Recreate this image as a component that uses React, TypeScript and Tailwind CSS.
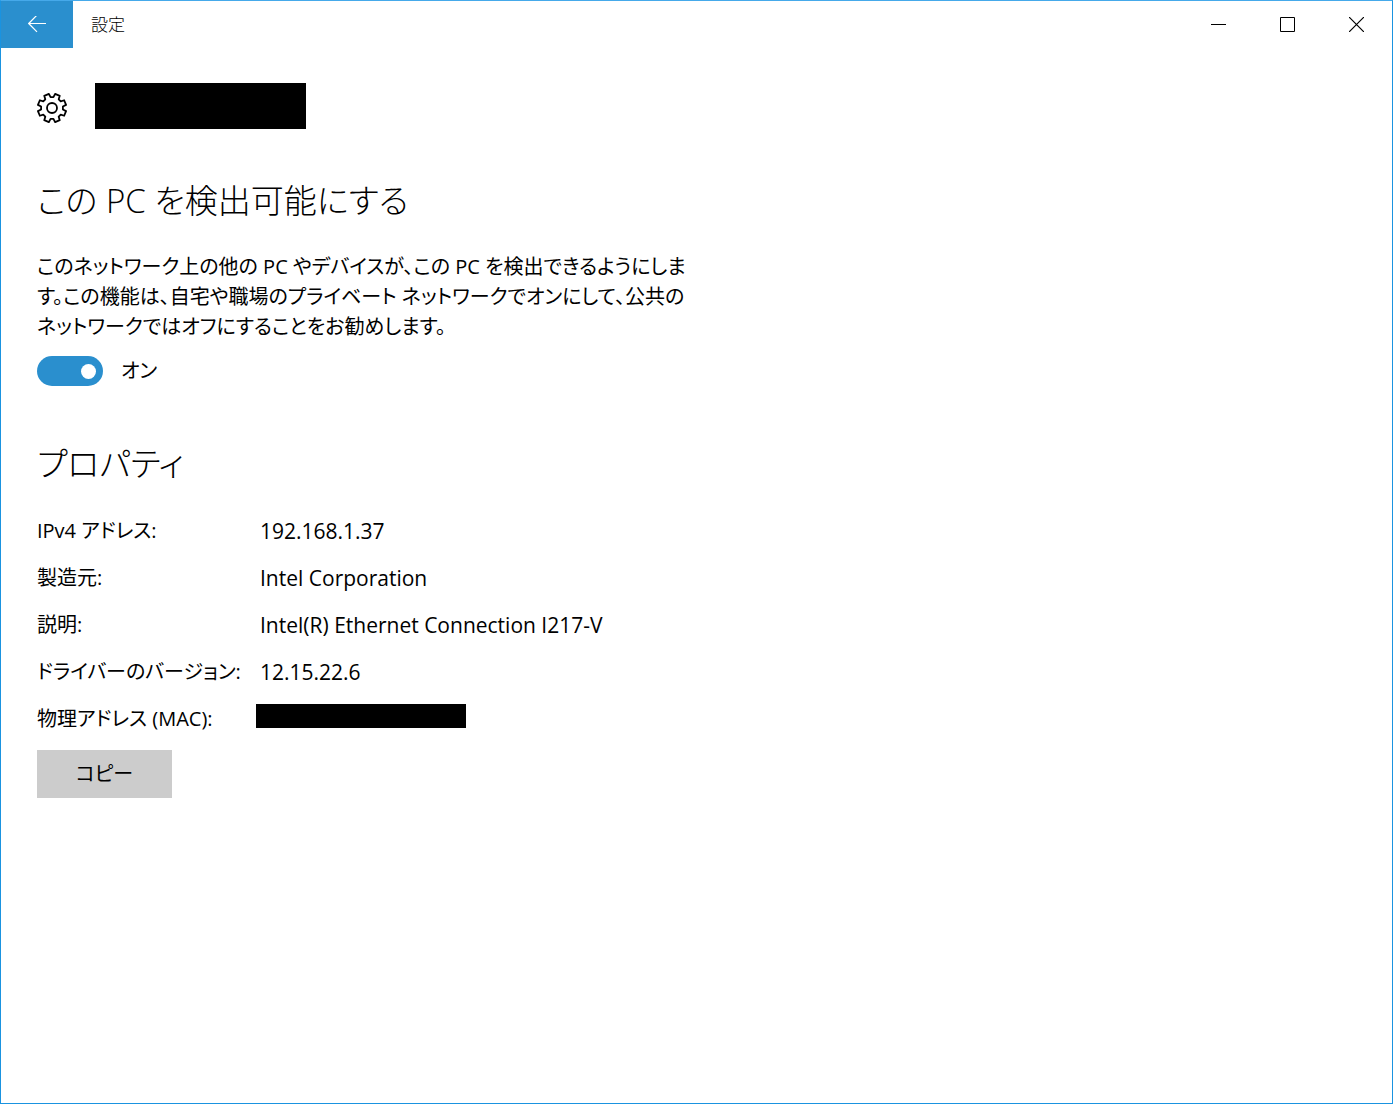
import React, { useState } from 'react';

interface Property {
  label: string;
  value: string;
}

const properties: Property[] = [
  { label: 'IPv4 アドレス:', value: '192.168.1.37' },
  { label: '製造元:', value: 'Intel Corporation' },
  { label: '説明:', value: 'Intel(R) Ethernet Connection I217-V' },
  { label: 'ドライバーのバージョン:', value: '12.15.22.6' },
  { label: '物理アドレス (MAC):', value: '' },
];

// Gear outline with eight teeth, centred on 0,0
const gearPath = (() => {
  const points: string[] = [];
  for (let i = 0; i < 8; i++) {
    const mid = i * 45 + 22.5;
    [[-15, 11], [-10, 14.4], [10, 14.4], [15, 11]].forEach(([offset, r]) => {
      const a = ((mid + offset - 90) * Math.PI) / 180;
      points.push(`${(r * Math.cos(a)).toFixed(2)} ${(r * Math.sin(a)).toFixed(2)}`);
    });
  }
  return `M${points.join('L')}Z`;
})();

const GearIcon: React.FC = () => (
  <svg className="h-[30px] w-[30px]" viewBox="-15 -15 30 30" fill="none" stroke="currentColor" strokeWidth={1.8} strokeLinejoin="round" aria-hidden="true">
    <path d={gearPath} />
    <circle r={5} />
  </svg>
);

const TitleBar: React.FC = () => (
  <header className="flex items-start justify-between">
    <div className="flex items-center">
      <button className="flex h-[47px] w-[72px] items-center justify-center bg-[#2a8fce] text-white" aria-label="戻る">
        <svg width="18" height="18" viewBox="0 0 18 18" fill="none" stroke="currentColor" strokeWidth={1.2}>
          <path d="M18 7.5H.8M9-.9L.7 7.5 9 15.9" />
        </svg>
      </button>
      <span className="ml-[18px] text-[17px] leading-6 font-light">設定</span>
    </div>
    <div className="flex pr-px">
      <button className="flex h-[47px] w-[69px] items-center justify-center" aria-label="最小化">
        <svg width="15" height="15" viewBox="0 0 15 15" stroke="currentColor">
          <path d="M0 7.5h15" />
        </svg>
      </button>
      <button className="flex h-[47px] w-[69px] items-center justify-center" aria-label="最大化">
        <svg width="15" height="15" viewBox="0 0 15 15" fill="none" stroke="currentColor">
          <path d="M.5.5h14v14H.5z" />
        </svg>
      </button>
      <button className="flex h-[47px] w-[69px] items-center justify-center" aria-label="閉じる">
        <svg width="15" height="15" viewBox="0 0 15 15" stroke="currentColor" strokeWidth={1.2}>
          <path d="M0 0l15 15M15 0L0 15" />
        </svg>
      </button>
    </div>
  </header>
);

interface ToggleProps {
  checked: boolean;
  onChange: (checked: boolean) => void;
}

const Toggle: React.FC<ToggleProps> = ({ checked, onChange }) => (
  <label className="mt-3.5 flex items-center gap-[18px] text-[20px] leading-[30px]">
    <input
      type="checkbox"
      role="switch"
      checked={checked}
      onChange={(e) => onChange(e.target.checked)}
      className="flex h-[30px] w-[66px] appearance-none items-center rounded-full bg-gray-400 px-[7px] before:h-[15px] before:w-[15px] before:rounded-full before:bg-white checked:justify-end checked:bg-[#2a8fce]"
    />
    <span>{checked ? 'オン' : 'オフ'}</span>
  </label>
);

export default function App() {
  const [discoverable, setDiscoverable] = useState(true);

  return (
    <div
      lang="ja"
      className="min-h-screen border border-[#1a93e0] border-t-[#45a9ea] bg-white font-['Open_Sans','Noto_Sans_CJK_JP',sans-serif] text-black [font-feature-settings:'palt']"
    >
      <TitleBar />
      <main className="px-9 pt-[35px]">
        <div className="flex items-end">
          <div className="pb-1.5">
            <GearIcon />
          </div>
          <h1 className="ml-7 h-[46px] w-[211px] bg-black" />
        </div>

        <section className="mt-12">
          <h2 className="text-[33px] leading-[48px] font-light">この PC を検出可能にする</h2>
          <p className="mt-[27px] text-[20px] leading-[30px]">
            このネットワーク上の他の PC やデバイスが、この PC を検出できるようにしま
            <br />
            す。この機能は、自宅や職場のプライベート ネットワークでオンにして、公共の
            <br />
            ネットワークではオフにすることをお勧めします。
          </p>
          <Toggle checked={discoverable} onChange={setDiscoverable} />
        </section>

        <section className="mt-[54px]">
          <h2 className="text-[33px] leading-[48px] font-light">プロパティ</h2>
          <table className="mt-[19px] text-left text-[21px] leading-[30px]">
            <tbody>
              {properties.map(({ label, value }) => (
                <tr key={label} className="h-[47px]">
                  <th scope="row" className="w-[219px] p-0 text-[20px] font-normal whitespace-nowrap">{label}</th>
                  <td className="p-0">
                    {value ? <span className="ml-1">{value}</span> : <div className="mb-1.5 h-6 w-[210px] bg-black" />}
                  </td>
                </tr>
              ))}
            </tbody>
          </table>
          <button className="mt-2 h-12 w-[135px] bg-[#cccccc] text-[20px]">コピー</button>
        </section>
      </main>
    </div>
  );
}
